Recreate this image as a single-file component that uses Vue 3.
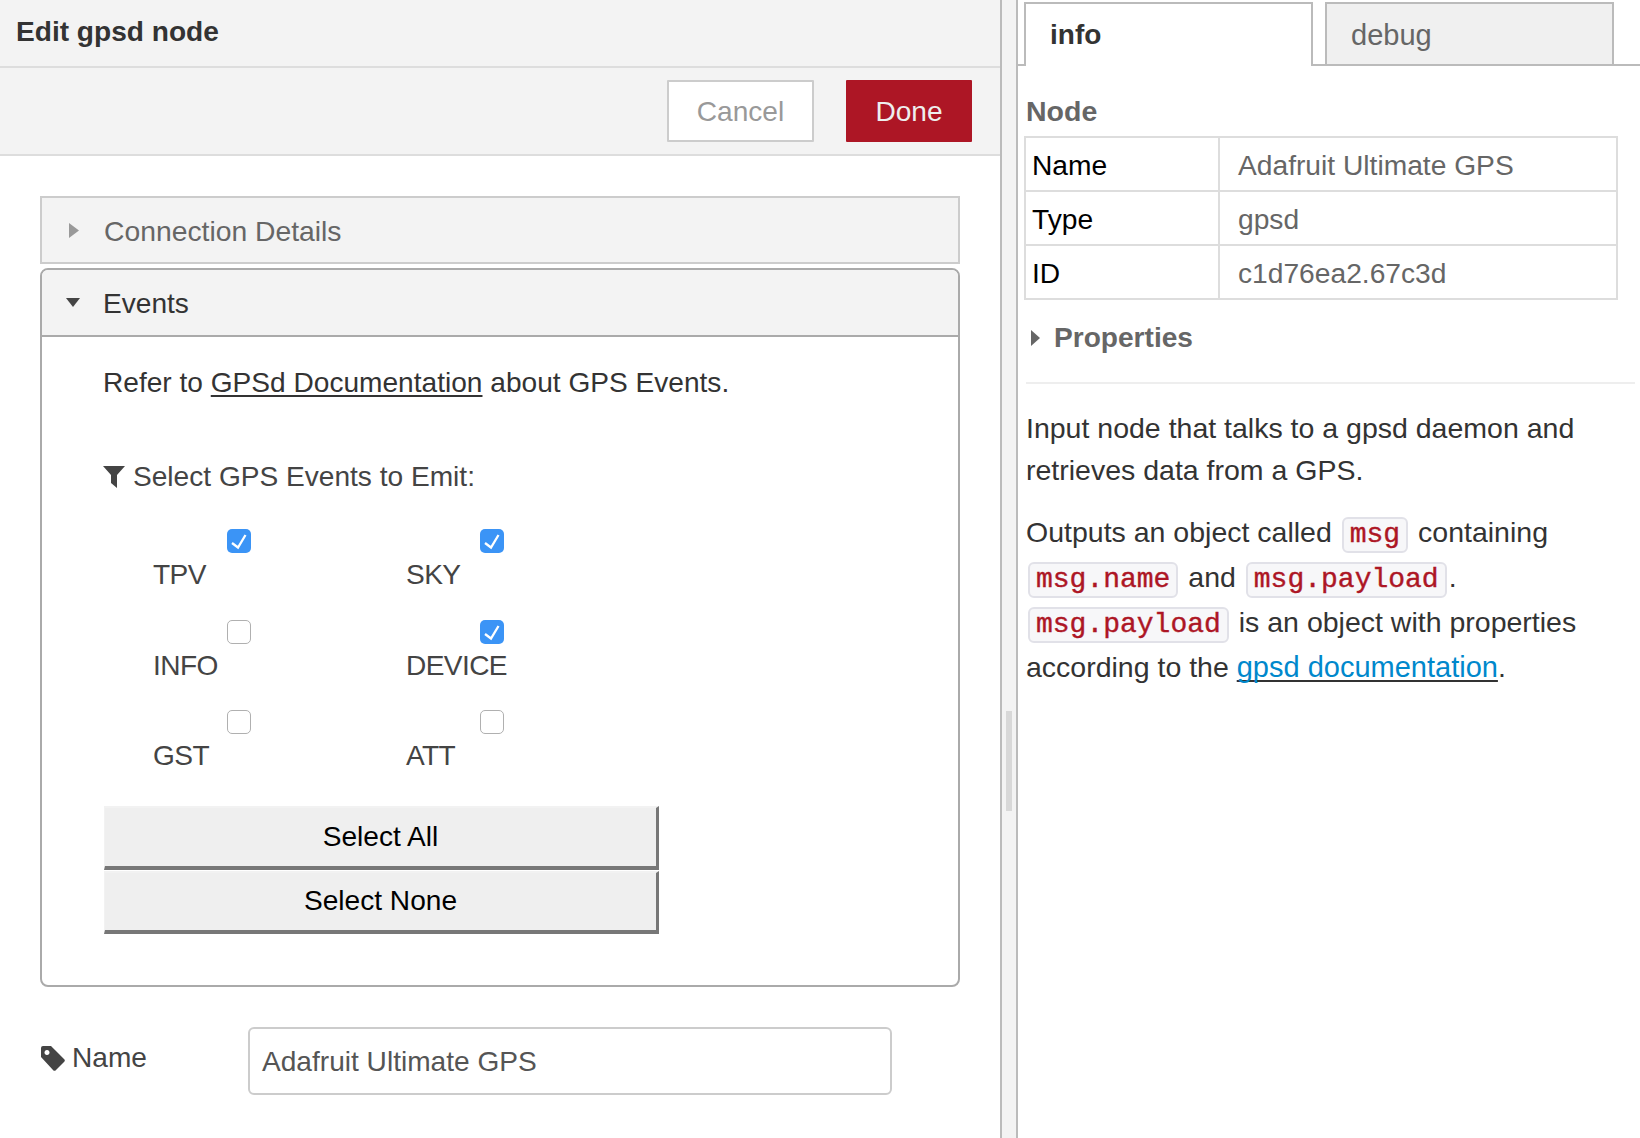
<template>
  <div class="page">
    <div class="editor">
      <div class="title">Edit gpsd node</div>
      <div class="toolbar">
        <button class="btn btn--cancel" type="button">Cancel</button>
        <button class="btn btn--done" type="button">Done</button>
      </div>
      <div class="form">
        <div class="section section--closed">
          <svg class="caret" width="10" height="15" viewBox="0 0 10 15"><path d="M0 0l10 7.500L0 15z" fill="#999" /></svg>
          <span>Connection Details</span>
        </div>
        <div class="panel">
          <div class="section section--open">
            <svg class="caret" width="14" height="9" viewBox="0 0 14 9"><path d="M0 0h14L7 9z" fill="#444" /></svg>
            <span>Events</span>
          </div>
          <div class="panel__body">
            <p class="refer">Refer to <a class="plain-link" href="#">GPSd Documentation</a> about GPS Events.</p>
            <div class="filter">
              <svg width="22" height="22" viewBox="0 0 22 22"><path d="M0 0h22l-8 9v13l-6-5V9z" fill="#444" /></svg>
              <span>Select GPS Events to Emit:</span>
            </div>
            <div class="events">
              <div v-for="ev in events" :key="ev.name" class="event">
                <span class="check" :class="{ 'check--on': ev.on }">
                  <svg v-if="ev.on" width="24" height="24" viewBox="0 0 24 24"><path d="M5 14l6 4.500L18.500 6" fill="none" stroke="#fff" stroke-width="2.300" /></svg>
                </span>
                <span class="event__name">{{ ev.name }}</span>
              </div>
            </div>
            <button class="select-btn" type="button">Select All</button>
            <button class="select-btn select-btn--last" type="button">Select None</button>
          </div>
        </div>
        <div class="name-row">
          <label class="name-label">
            <svg width="26" height="26" viewBox="0 0 26 26"><path d="M1 3a2 2 0 0 1 2-2h8l13 13a2 2 0 0 1 0 3l-8 8a2 2 0 0 1-3 0L1 12zM7 5a2.500 2.500 0 1 0 .01 0z" fill="#444" fill-rule="evenodd" /></svg>
            <span>Name</span>
          </label>
          <div class="name-input">Adafruit Ultimate GPS</div>
        </div>
      </div>
    </div>

    <div class="sash"><div class="sash__grip"></div></div>

    <div class="sidebar">
      <div class="tabs">
        <div class="tab tab--active">info</div>
        <div class="tab">debug</div>
      </div>
      <div class="info">
        <div class="info__heading">Node</div>
        <table class="info__table">
          <tbody>
            <tr v-for="row in rows" :key="row[0]">
              <td class="key">{{ row[0] }}</td>
              <td class="val">{{ row[1] }}</td>
            </tr>
          </tbody>
        </table>
        <div class="props">
          <svg width="10" height="18" viewBox="0 0 10 18"><path d="M0 1l9 8-9 8z" fill="#666" /></svg>
          <span>Properties</span>
        </div>
        <div class="rule"></div>
        <p class="para para--first">Input node that talks to a gpsd daemon and retrieves data from a GPS.</p>
        <p class="para">
          Outputs an object called <code>msg</code> containing
          <code>msg.name</code> and <code>msg.payload</code>.
          <code>msg.payload</code> is an object with properties
          according to the <a class="doc-link" href="#">gpsd documentation</a>.
        </p>
      </div>
    </div>
  </div>
</template>

<script setup>
const events = [
  { name: "TPV", on: true },
  { name: "SKY", on: true },
  { name: "INFO", on: false },
  { name: "DEVICE", on: true },
  { name: "GST", on: false },
  { name: "ATT", on: false },
];

const rows = [
  ["Name", "Adafruit Ultimate GPS"],
  ["Type", "gpsd"],
  ["ID", "c1d76ea2.67c3d"],
];
</script>

<style>
html,
body {
  margin: 0;
  background: #fff;
}
</style>

<style scoped>
.page {
  display: flex;
  width: 1640px;
  height: 1138px;
  overflow: hidden;
  font-family: "Liberation Sans", Arial, sans-serif;
  font-size: 28.1px;
  color: #333;
  background: #fff;
}

.editor {
  width: 1000px;
  flex: none;
}

.title {
  box-sizing: border-box;
  height: 68px;
  padding: 15px 0 0 16px;
  background: #f3f3f3;
  border-bottom: 2px solid #ddd;
  font-weight: bold;
  line-height: 34px;
}

.toolbar {
  display: flex;
  justify-content: flex-end;
  gap: 32px;
  box-sizing: border-box;
  height: 88px;
  padding: 12px 28px 0 0;
  background: #f3f3f3;
  border-bottom: 2px solid #ddd;
}

.btn {
  height: 62px;
  box-sizing: border-box;
  padding: 2px 0 0;
  font: inherit;
  border-radius: 1px;
}

.btn--cancel {
  width: 147px;
  background: #fff;
  border: 2px solid #ccc;
  color: #999;
}

.btn--done {
  width: 126px;
  background: #ad1625;
  border: none;
  color: #eee;
}

.form {
  padding: 40px 40px 0;
}

.section {
  display: flex;
  align-items: center;
  box-sizing: border-box;
  height: 68px;
  background: #f3f3f3;
  position: relative;
}

.section .caret {
  position: absolute;
}

.section--closed {
  width: 920px;
  padding: 3px 0 0 62px;
  border: 2px solid #ccc;
  color: #666;
  font-size: 28.3px;
}

.section--closed .caret {
  left: 27px;
  top: 25px;
}

.section--open {
  height: 67px;
  padding: 2px 0 0 61px;
  border-bottom: 2px solid #aaa;
  border-radius: 6px 6px 0 0;
}

.section--open .caret {
  left: 24px;
  top: 28px;
}

.panel {
  width: 920px;
  height: 719px;
  margin-top: 4px;
  box-sizing: border-box;
  border: 2px solid #aaa;
  border-radius: 8px;
}

.panel__body {
  padding: 28px 0 0 61px;
}

.refer {
  margin: 0;
  line-height: 36px;
}

.plain-link {
  color: #333;
  text-decoration: underline;
  text-underline-offset: 3px;
  text-decoration-skip-ink: none;
}

.filter {
  display: flex;
  align-items: center;
  gap: 8px;
  margin-top: 58px;
  color: #444;
  line-height: 36px;
}

.events {
  display: grid;
  grid-template-columns: 253px 200px;
  grid-auto-rows: 90.5px;
  margin: 34px 0 5px 50px;
  color: #444;
}

.event {
  display: flex;
  flex-direction: column;
  align-items: flex-start;
  line-height: 34px;
}

.check {
  display: flex;
  align-items: center;
  justify-content: center;
  width: 24px;
  height: 24px;
  box-sizing: border-box;
  margin-left: 74px;
  border: 1px solid #b0b0b0;
  border-radius: 5px;
  background: #fff;
}

.check--on {
  border: none;
  background: #3b94f6;
}

.event__name {
  margin-top: 5px;
  letter-spacing: -0.6px;
}

.select-btn {
  display: block;
  width: 555px;
  height: 64px;
  box-sizing: border-box;
  margin: 0 0 1px 1px;
  padding: 0;
  background: #efefef;
  border-style: solid;
  border-width: 2px 3px 4px 1px;
  border-color: #f2f2f2 #777 #777 #f2f2f2;
  font: inherit;
  color: #000;
}

.select-btn--last {
  height: 63px;
}

.name-row {
  display: flex;
  margin-top: 40px;
}

.name-label {
  display: flex;
  align-items: center;
  gap: 6px;
  width: 208px;
  height: 62px;
  color: #444;
}

.name-input {
  width: 644px;
  height: 68px;
  box-sizing: border-box;
  padding: 0 12px;
  border: 2px solid #ccc;
  border-radius: 6px;
  color: #555;
  line-height: 66px;
}

.sash {
  position: relative;
  width: 18px;
  flex: none;
  box-sizing: border-box;
  background: #f3f3f3;
  border-left: 2px solid #bbb;
  border-right: 2px solid #bbb;
}

.sash__grip {
  position: absolute;
  left: 4px;
  top: 711px;
  width: 6px;
  height: 100px;
  background: #d8d8d8;
}

.sidebar {
  flex: 1;
  min-width: 0;
}

.tabs {
  display: flex;
  gap: 12px;
  height: 66px;
  box-sizing: border-box;
  padding: 2px 0 0 6px;
  border-bottom: 2px solid #bbb;
}

.tab {
  width: 289px;
  height: 62px;
  box-sizing: border-box;
  padding-left: 24px;
  line-height: 62px;
  background: #f0f0f0;
  border: 2px solid #bbb;
  border-bottom: none;
  color: #666;
  font-size: 29px;
}

.tab--active {
  height: 64px;
  background: #fff;
  color: #333;
  font-size: 28px;
  font-weight: bold;
}

.info {
  padding: 0 5px 0 8px;
}

.info__heading {
  margin-top: 27px;
  height: 36px;
  line-height: 36px;
  font-size: 28.5px;
  font-weight: bold;
  color: #666;
}

.info__table {
  width: 594px;
  margin: 7px 0 0 -2px;
  border-collapse: collapse;
  border: 2px solid #ddd;
}

.info__table td {
  height: 54px;
  padding: 2px 0 0;
  border: 2px solid #ddd;
  box-sizing: border-box;
  font-size: 28.2px;
}

.key {
  width: 194px;
  padding-left: 6px !important;
  color: #000;
}

.val {
  padding-left: 18px !important;
  color: #666;
}

.props {
  display: flex;
  align-items: center;
  gap: 13px;
  margin: 20px 0 0 5px;
  height: 36px;
  font-weight: bold;
  color: #666;
}

.rule {
  height: 2px;
  margin-top: 26px;
  background: #eee;
}

.para {
  margin: 0;
  font-size: 28.5px;
  line-height: 42px;
}

.para--first {
  margin-top: 23px;
  width: 590px;
}

.para:not(.para--first) {
  margin-top: 19px;
  width: 590px;
  line-height: 45px;
}

code {
  display: inline-block;
  height: 36px;
  box-sizing: border-box;
  margin: 0 2px;
  padding: 0 6px;
  border: 2px solid #e1e1e8;
  border-radius: 6px;
  background: #f7f7f9;
  color: #ad1625;
  font-family: "Liberation Mono", "Courier New", monospace;
  font-size: 28px;
  line-height: 32px;
  vertical-align: baseline;
  -webkit-text-stroke: 0.4px #ad1625;
}

.doc-link {
  color: #0088cc;
  font-size: 29px;
  text-decoration: underline;
  text-decoration-color: #333;
  text-decoration-skip-ink: none;
  text-underline-offset: 3px;
}
</style>
